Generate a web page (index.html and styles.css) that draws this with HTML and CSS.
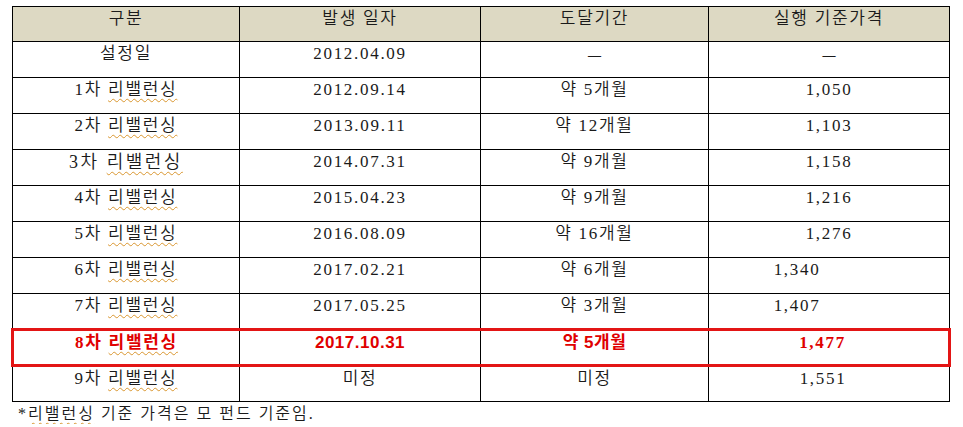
FILE: index.html
```html
<!DOCTYPE html>
<html lang="ko">
<head>
<meta charset="utf-8">
<link rel="stylesheet" href="styles.css">
</head>
<body>
<table class="tbl">
  <colgroup>
    <col class="c1"><col class="c2"><col class="c3"><col class="c4">
  </colgroup>
  <thead>
    <tr><th>구분</th><th>발생 일자</th><th>도달기간</th><th>실행 기준가격</th></tr>
  </thead>
  <tbody>
    <tr><td>설정일</td><td>2012.04.09</td><td><span class="dash">—</span></td><td><span class="dash">—</span></td></tr>
    <tr><td>1차 <span class="sq">리밸런싱</span></td><td>2012.09.14</td><td>약 5개월</td><td>1,050</td></tr>
    <tr><td>2차 <span class="sq">리밸런싱</span></td><td>2013.09.11</td><td>약 12개월</td><td>1,103</td></tr>
    <tr><td class="big">3차 <span class="sq">리밸런싱</span></td><td>2014.07.31</td><td>약 9개월</td><td>1,158</td></tr>
    <tr><td>4차 <span class="sq">리밸런싱</span></td><td>2015.04.23</td><td>약 9개월</td><td>1,216</td></tr>
    <tr><td>5차 <span class="sq">리밸런싱</span></td><td>2016.08.09</td><td>약 16개월</td><td>1,276</td></tr>
    <tr><td>6차 <span class="sq">리밸런싱</span></td><td>2017.02.21</td><td>약 6개월</td><td class="off">1,340</td></tr>
    <tr><td>7차 <span class="sq">리밸런싱</span></td><td>2017.05.25</td><td>약 3개월</td><td class="off">1,407</td></tr>
    <tr class="hl"><td>8차 <span class="sq">리밸런싱</span></td><td class="sans">2017.10.31</td><td class="sans">약 5개월</td><td class="nudge">1,477</td></tr>
    <tr><td>9차 <span class="sq">리밸런싱</span></td><td>미정</td><td>미정</td><td class="nudge">1,551</td></tr>
  </tbody>
</table>
<p class="note">*<span class="sq">리밸런싱</span> 기준 가격은 모 펀드 기준임.</p>
</body>
</html>
```
FILE: styles.css
```css
html, body {
  margin: 0;
  background: #fff;
}
body {
  padding: 6px 0 0 11px;
  font-family: "Liberation Serif", "Noto Sans CJK KR", serif;
  font-size: 17px;
  font-weight: 350;
  color: #1a1a1a;
}
.tbl {
  border-collapse: collapse;
  width: 937px;
  table-layout: fixed;
  letter-spacing: 1.7px;
}
.c1 { width: 227px; }
.c2 { width: 241px; }
.c3 { width: 228px; }
.c4 { width: 241px; }
.tbl th, .tbl td {
  border: 1px solid #000;
  height: 36px;
  box-sizing: border-box;
  padding: 2px 0 0;
  vertical-align: top;
  text-align: center;
  font-weight: 350;
  line-height: 20px;
}
.tbl th {
  background: #ddd9c3;
  height: 35px;
}
.dash {
  font-size: 13px;
  letter-spacing: 0;
  font-weight: bold;
}
.sq {
  text-decoration: underline wavy #d9962f;
  text-decoration-thickness: 1px;
  text-underline-offset: 3px;
  text-decoration-skip-ink: none;
}
.big {
  font-size: 18px;
  letter-spacing: 2.5px;
}
.off {
  padding-right: 64px !important;
}
.nudge {
  padding-right: 12px !important;
}
.hl td {
  color: #e00000;
  font-weight: bold;
  border-top: 3px solid #e31515;
  border-bottom: 3px solid #e31515;
}
.hl td:first-child { border-left: 3px solid #e31515; }
.hl td:last-child { border-right: 3px solid #e31515; }
.hl .sans {
  font-family: "Liberation Sans", "Noto Sans CJK KR", sans-serif;
  letter-spacing: 0.5px;
}
.note {
  margin: 2px 0 0 7px;
  font-size: 16px;
  letter-spacing: 2px;
  line-height: 20px;
}
```
